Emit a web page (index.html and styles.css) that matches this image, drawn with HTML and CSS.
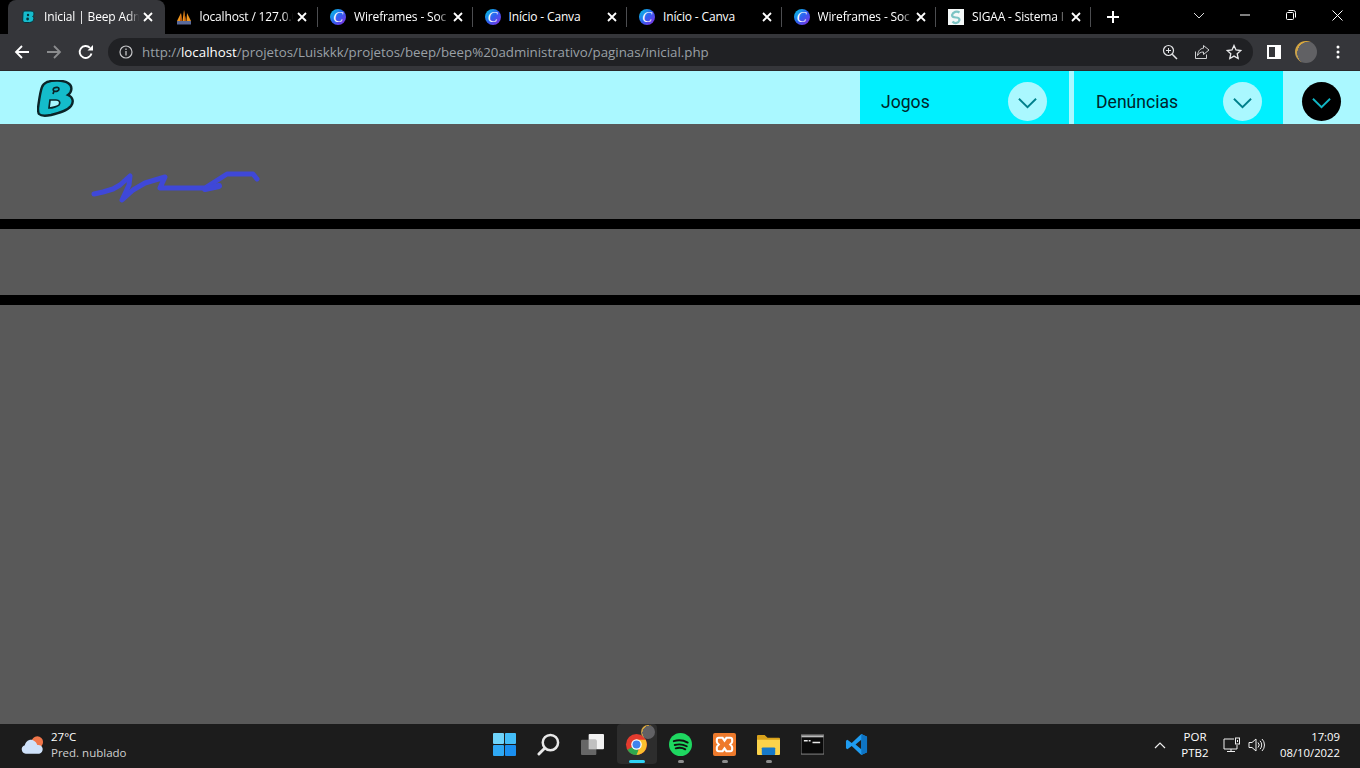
FILE: index.html
```html
<!DOCTYPE html>
<html lang="pt-BR">
<head>
<meta charset="utf-8">
<title>Inicial | Beep Admin</title>
<link rel="stylesheet" href="styles.css">
</head>
<body>
<svg class="defs" width="0" height="0" aria-hidden="true">
  <defs>
    <symbol id="x" viewBox="0 0 10 10"><path d="M1 1l8 8M9 1l-8 8" fill="none" stroke="#fff" stroke-width="1.8"/></symbol>
    <symbol id="chev" viewBox="0 0 24 14"><path d="M2 2l10 10L22 2" fill="none" stroke="currentColor" stroke-width="2.200"/></symbol>
  </defs>
</svg>

<div class="tabstrip">
  <div class="tab active">
    <svg class="fav" viewBox="0 0 16 16"><path d="M5 2h6c2 0 3 1 3 3 0 1-.5 2-1.300 2.500 1 .5 1.300 1.500 1.100 2.500-.3 2-2 3.500-4.300 3.500H5c-1.500 0-2.500-1-2.300-2.500L3 4c.2-1.200 1-2 2-2z" fill="#16bccd" stroke="#06333a" stroke-width="1"/><circle cx="8" cy="6" r="1.200" fill="#06333a"/><circle cx="7.600" cy="10" r="1.400" fill="#06333a"/></svg>
    <span class="title">Inicial | Beep Adm</span>
    <svg class="close"><use href="#x"/></svg>
  </div>
  <div class="tab nosep">
    <svg class="fav" viewBox="0 0 16 16"><path d="M1 12L5 4l1 8zM6.500 12L8 1l2 11zM10.500 12L11 4l4 8z" fill="#f0961e"/><path d="M5 4l1 8H4zM8 1l2 11H8.500z" fill="#b8560c"/><rect x="1" y="12" width="14" height="3.500" fill="#5a6a9a"/></svg>
    <span class="title">localhost / 127.0.0</span>
    <svg class="close"><use href="#x"/></svg>
  </div>
  <div class="tab">
    <span class="canva">C</span>
    <span class="title">Wireframes - Soc</span>
    <svg class="close"><use href="#x"/></svg>
  </div>
  <div class="tab">
    <span class="canva">C</span>
    <span class="title title-wide">Início - Canva</span>
    <svg class="close"><use href="#x"/></svg>
  </div>
  <div class="tab">
    <span class="canva">C</span>
    <span class="title title-wide">Início - Canva</span>
    <svg class="close"><use href="#x"/></svg>
  </div>
  <div class="tab">
    <span class="canva">C</span>
    <span class="title">Wireframes - Soc</span>
    <svg class="close"><use href="#x"/></svg>
  </div>
  <div class="tab">
    <svg class="fav" viewBox="0 0 16 16"><rect width="16" height="16" fill="#f4f8f8"/><path d="M11.500 3.500A5 5 0 0 0 4 6c0 2.500 2.500 2.500 4 2.500s3.500.5 3.500 2.500A4 4 0 0 1 4.500 12.500" fill="none" stroke="#7cc4c4" stroke-width="2.200"/></svg>
    <span class="title">SIGAA - Sistema I</span>
    <svg class="close"><use href="#x"/></svg>
  </div>
  <div class="newtab"><svg width="12" height="12" viewBox="0 0 12 12"><path d="M6 0v12M0 6h12" stroke="#fff" stroke-width="2"/></svg></div>
  <div class="winctl">
    <span class="wbtn"><svg width="12" height="7" viewBox="0 0 12 7"><path d="M1 1l5 5 5-5" fill="none" stroke="#ddd"/></svg></span>
    <span class="wbtn"><svg width="10" height="2" viewBox="0 0 10 2"><path d="M0 1h10" stroke="#fff"/></svg></span>
    <span class="wbtn"><svg width="10" height="10" viewBox="0 0 10 10"><rect x=".5" y="2.500" width="7" height="7" rx="1" fill="none" stroke="#fff"/><path d="M2.500 .5h5a2 2 0 0 1 2 2v5" fill="none" stroke="#fff"/></svg></span>
    <span class="wbtn"><svg width="11" height="11" viewBox="0 0 11 11"><path d="M.5 .5l10 10M10.500 .5l-10 10" stroke="#fff"/></svg></span>
  </div>
</div>

<div class="toolbar">
  <svg class="tool" viewBox="0 0 16 16"><path d="M15 8H2M8 2L2 8l6 6" fill="none" stroke="#fff" stroke-width="1.800"/></svg>
  <svg class="tool" viewBox="0 0 16 16"><path d="M1 8h13M8 2l6 6-6 6" fill="none" stroke="#8b8c8e" stroke-width="1.800"/></svg>
  <svg class="tool" viewBox="0 0 16 16"><path d="M13.500 9.500A6 6 0 1 1 12 3.800" fill="none" stroke="#fff" stroke-width="1.900"/><path d="M9.500 6.500H15V1z" fill="#fff"/></svg>
  <div class="omnibox">
    <svg class="info" viewBox="0 0 14 14"><circle cx="7" cy="7" r="6" fill="none" stroke="#c4c5c7" stroke-width="1.200"/><path d="M7 6v4.500M7 3.500v1.400" stroke="#c4c5c7" stroke-width="1.300"/></svg>
    <span class="url">http://<b>localhost</b>/projetos/Luiskkk/projetos/beep/beep%20administrativo/paginas/inicial.php</span>
    <svg class="omni-ic" viewBox="0 0 16 16"><circle cx="6.500" cy="6.500" r="5" fill="none" stroke="#e4e5e7" stroke-width="1.200"/><path d="M10.200 10.200L15 15" stroke="#e4e5e7" stroke-width="1.500"/><path d="M4 6.500h5M6.500 4v5" stroke="#e4e5e7"/></svg>
    <svg class="omni-ic" viewBox="0 0 16 16"><path d="M1.500 7.500v7h11v-4" fill="none" stroke="#d0d1d3"/><path d="M9.500 1.500l5.500 4.500-5.500 4.500V8C6.500 8 5 9 3.500 11.500 4 7 6 4.500 9.500 4.200z" fill="none" stroke="#d0d1d3"/></svg>
    <svg class="omni-ic" viewBox="0 0 16 16"><path d="M8 1.500l2 4.500 4.800.5-3.600 3.200 1 4.800L8 12.100l-4.200 2.400 1-4.800L1.200 6.500 6 6z" fill="none" stroke="#e8e9eb" stroke-width="1.300"/></svg>
  </div>
  <svg class="panel" viewBox="0 0 14 14"><rect x="1" y="1" width="12" height="12" fill="none" stroke="#fff" stroke-width="2"/><rect x="8" y="1" width="5" height="12" fill="#fff"/></svg>
  <span class="avatar small"></span>
  <svg class="dots" viewBox="0 0 4 14"><circle cx="2" cy="2" r="1.500" fill="#fff"/><circle cx="2" cy="7" r="1.500" fill="#fff"/><circle cx="2" cy="12" r="1.500" fill="#fff"/></svg>
</div>

<header class="nav">
  <svg class="logo" viewBox="0 0 38 38">
    <path d="M10 2C16 0 26 0 31 3c5 3 4 9 0 12 5 2 6 7 3 11-4 5-12 7-20 9-5 1-10 1-12-1-1-1-1-3-1-6C2 21 3 12 5 7c1-3 3-4 5-5z" fill="#14bccb" stroke="#0b2428" stroke-width="2.400"/>
    <path d="M17 8c2-1 5-1 5 1s-3 3-5 2c-1-1-1-2 0-3zM17 11l-1 3" fill="#14bccb" stroke="#0b2428" stroke-width="1.700"/>
    <path d="M13 20h6c3 0 5 2 3 5-1 1-6 3-10 3z" fill="#a9f7ff" stroke="#0b2428" stroke-width="1.700"/>
  </svg>
  <nav class="menu">
    <a class="menu-item">Jogos<span class="round"><svg class="ch" viewBox="0 0 24 14"><use href="#chev"/></svg></span></a>
    <a class="menu-item">Denúncias<span class="round"><svg class="ch" viewBox="0 0 24 14"><use href="#chev"/></svg></span></a>
  </nav>
  <div class="user"><span class="round dark"><svg class="ch" viewBox="0 0 24 14"><use href="#chev"/></svg></span></div>
</header>

<main class="main">
  <section class="hero">
    <svg class="scribble" width="175" height="34" viewBox="0 0 175 34">
      <path d="M6 24l9-2 10-3 7-4 10-9-1 9-7 15 11-10 12-7 20-6-5 11h45l22-14h26l4 5" fill="none" stroke="#3f48d8" stroke-width="5" stroke-linecap="round" stroke-linejoin="round"/>
      <path d="M117 19l14-3" fill="none" stroke="#3f48d8" stroke-width="6" stroke-linecap="round"/>
    </svg>
  </section>
  <div class="rule"></div>
  <section class="band"></section>
  <div class="rule"></div>
</main>

<footer class="taskbar">
  <div class="weather">
    <svg class="cloud" viewBox="0 0 26 20"><circle cx="18" cy="7" r="6" fill="#f0764a"/><path d="M6 19a4.500 4.500 0 0 1-1-8.800C6 6 10 3.500 13.500 5c2.500 1 4 3 4.500 5a4.500 4.500 0 0 1 2 9z" fill="#cfe2fa"/></svg>
    <div class="wtext"><span class="temp">27°C</span><span class="cond">Pred. nublado</span></div>
  </div>
  <div class="apps">
    <span class="app">
      <svg class="appic" viewBox="0 0 24 24"><rect x="0" y="0" width="11.500" height="11.500" rx="1" fill="#6fd4fb"/><rect x="12.500" y="0" width="11.500" height="11.500" rx="1" fill="#43bdf8"/><rect x="0" y="12.500" width="11.500" height="11.500" rx="1" fill="#2fa8f4"/><rect x="12.500" y="12.500" width="11.500" height="11.500" rx="1" fill="#1a8ff0"/></svg>
    </span>
    <span class="app">
      <svg class="appic" viewBox="0 0 24 24"><circle cx="14" cy="10" r="8" fill="none" stroke="#e8e8e8" stroke-width="2.600"/><path d="M8 16l-6 6" stroke="#e8e8e8" stroke-width="3" stroke-linecap="round"/></svg>
    </span>
    <span class="app">
      <svg class="appic" viewBox="0 0 24 24"><rect x="8" y="1" width="16" height="16" rx="1" fill="#f2f2f2"/><rect x="0" y="7" width="16" height="16" rx="1" fill="#6a6a6a" opacity=".95"/><rect x="8" y="7" width="8" height="10" fill="#c0c0c0"/></svg>
    </span>
    <span class="app current">
      <svg class="appic" viewBox="0 0 24 24"><circle cx="12" cy="12" r="11" fill="#e33b2e"/><path d="M12 12L2.500 17.500A11 11 0 0 0 12 23c1 0 2 0 3-.5z" fill="#2fa84f"/><path d="M12 7h9.500A11 11 0 0 1 12 23l4-10z" fill="#fbc02d"/><circle cx="12" cy="12" r="5.500" fill="#fff"/><circle cx="12" cy="12" r="4.200" fill="#3f83ee"/></svg>
      <span class="avatar badge"></span>
      <span class="mark active-mark"></span>
    </span>
    <span class="app">
      <svg class="appic" viewBox="0 0 24 24"><circle cx="12" cy="12" r="12" fill="#1ed760"/><path d="M5 8.500c5-1.500 10-1 14.500 1.500M6 12.500c4.500-1.200 8.500-.8 12.500 1.300M7 16c3.500-1 7-.7 10 1" fill="none" stroke="#111" stroke-width="2" stroke-linecap="round"/></svg>
      <span class="mark"></span>
    </span>
    <span class="app">
      <svg class="appic" viewBox="0 0 24 24"><rect width="24" height="24" rx="2" fill="#ee7a2c"/><path d="M6 5h4l2 3 2-3h4c1 0 2 1 2 2v2c0 1-1 2-2 3 1 1 2 2 2 3v2c0 1-1 2-2 2h-4l-2-3-2 3H6c-1 0-2-1-2-2v-2c0-1 1-2 2-3-1-1-2-2-2-3V7c0-1 1-2 2-2z" fill="none" stroke="#fff" stroke-width="2.200"/></svg>
      <span class="mark"></span>
    </span>
    <span class="app">
      <svg class="appic" viewBox="0 0 24 24"><path d="M0 3c0-.6.4-1 1-1h7l3 3h12c.6 0 1 .4 1 1v3H0z" fill="#d9a21b"/><path d="M0 7h24v15c0 .6-.4 1-1 1H1c-.6 0-1-.4-1-1z" fill="#fbd34b"/><rect x="5" y="15" width="14" height="8" rx="1" fill="#1679c9"/></svg>
      <span class="mark"></span>
    </span>
    <span class="app">
      <svg class="appic" viewBox="0 0 24 24"><rect y="2" width="24" height="20" fill="#0a0a0a" stroke="#8a8a8a"/><rect x=".5" y="2.500" width="23" height="2" fill="#bcbcbc"/><path d="M3 8h4M8 8h2M12 10h8" stroke="#e8e8e8" stroke-width="1.500"/></svg>
    </span>
    <span class="app">
      <svg class="appic" viewBox="0 0 24 24"><path d="M17 1l6 3v16l-6 3L7 13.500 2.500 17 1 16v-8l1.500-1L7 10.500zM17 7l-6 5 6 5z" fill="#1f9cf0"/><path d="M17 1l6 3v16l-6 3z" fill="#0e74c4"/></svg>
    </span>
  </div>
  <div class="tray">
    <svg class="caret" viewBox="0 0 12 7"><path d="M1 6l5-5 5 5" fill="none" stroke="#eee" stroke-width="1.200"/></svg>
    <div class="lang"><span>POR</span><span>PTB2</span></div>
    <svg class="net" viewBox="0 0 18 16"><path d="M11 2H1v10h13V8M4 14.500h8M8 12v2.500" fill="none" stroke="#eee"/><rect x="12.500" y="1" width="4" height="6" fill="#1c1c1c" stroke="#eee"/><path d="M14.500 3v2" stroke="#eee"/></svg>
    <svg class="vol" viewBox="0 0 17 16"><path d="M1 5.500h3L8 2v12l-4-3.500H1z" fill="none" stroke="#eee"/><path d="M10 5.500a3.500 3.500 0 0 1 0 5M12 3.800a6 6 0 0 1 0 8.400M14 2a8.500 8.500 0 0 1 0 12" fill="none" stroke="#eee"/></svg>
    <div class="clock"><span>17:09</span><span>08/10/2022</span></div>
  </div>
</footer>
</body>
</html>
```

FILE: styles.css
```css
* { box-sizing: border-box; }
html, body { margin: 0; height: 100%; overflow: hidden; }
body {
  display: flex;
  flex-direction: column;
  height: 768px;
  background: #595959;
  font-family: "Open Sans", "Noto Sans", "Liberation Sans", sans-serif;
  color: #fff;
}
.defs { display: block; height: 0; }

/* Tab strip */
.tabstrip {
  display: flex;
  align-items: stretch;
  height: 34px;
  padding-left: 9px;
  background: #000;
  flex: none;
}
.tab {
  position: relative;
  display: flex;
  align-items: center;
  width: 154.5px;
  flex: none;
  padding: 0 10px 0 11px;
  border-left: 1px solid transparent;
  font-size: 12px;
  letter-spacing: -0.15px;
}
.tab::after {
  content: "";
  position: absolute;
  right: 0;
  top: 7px;
  height: 20px;
  width: 1px;
  background: #4c4d50;
}
.tab.active {
  background: #35363a;
  border-radius: 8px 8px 0 0;
  margin-left: -1px;
  width: 156.5px;
  padding-right: 12px;
}
.tab.active::after { display: none; }
.nosep { margin-left: -1px; padding-right: 11px; }
.fav { width: 16px; height: 16px; flex: none; }
.canva {
  flex: none;
  width: 16px;
  height: 16px;
  border-radius: 50%;
  background: linear-gradient(135deg, #00d0e0, #2f5ff0 50%, #8a2be2);
  color: #fff;
  font: italic 15px/16px "Liberation Serif", serif;
  text-align: center;
}
.title {
  flex: 1;
  min-width: 0;
  margin-left: 8px;
  white-space: nowrap;
  overflow: hidden;
  -webkit-mask-image: linear-gradient(90deg, #000 86%, transparent 97%);
  mask-image: linear-gradient(90deg, #000 86%, transparent 97%);
  line-height: 34px;
}
.title-wide { -webkit-mask-image: none; mask-image: none; }
.close { width: 10px; height: 10px; flex: none; margin-left: 1px; }
.newtab { width: 44px; display: flex; align-items: center; justify-content: center; }
.winctl { display: flex; margin-left: auto; }
.wbtn {
  width: 46px;
  height: 30px;
  display: flex;
  align-items: center;
  justify-content: center;
}

/* Toolbar */
.toolbar {
  display: flex;
  align-items: center;
  height: 37px;
  flex: none;
  background: #35363a;
  border-bottom: 1px solid #2a2a2c;
  padding: 0 0 1px 0;
}
.tool { width: 16px; height: 16px; flex: none; margin-left: 14px; margin-right: 2px; }
.omnibox {
  display: flex;
  align-items: center;
  flex: none;
  width: 1145px;
  height: 28px;
  margin-left: 12px;
  border-radius: 14px;
  background: #202124;
  padding: 0 11px 0 11px;
}
.info { width: 14px; height: 14px; flex: none; }
.url {
  flex: 1;
  margin-left: 9px;
  font-size: 13.3px;
  color: #9aa0a6;
  white-space: nowrap;
  overflow: hidden;
}
.url b { font-weight: 400; color: #fff; }
.omni-ic { width: 16px; height: 16px; flex: none; margin-left: 16px; }
.panel { width: 14px; height: 14px; flex: none; margin-left: 14px; }
.avatar {
  display: block;
  border-radius: 50%;
  background:
    radial-gradient(circle at 62% 55%, #616164 0 62%, transparent 63%),
    linear-gradient(#dca93c, #b99a56);
}
.avatar.small { width: 22px; height: 22px; flex: none; margin-left: 14px; }
.dots { width: 4px; height: 14px; flex: none; margin-left: 19px; }

/* Page nav */
.nav {
  display: flex;
  align-items: stretch;
  height: 53px;
  flex: none;
  background: #aaf8ff;
}
.logo { width: 38px; height: 38px; margin: 9px 0 0 37px; flex: none; }
.menu { display: flex; gap: 5px; margin-left: auto; }
.menu-item {
  display: flex;
  align-items: center;
  justify-content: space-between;
  width: 209px;
  padding: 8px 22px 0 22px;
  background: #00f0ff;
  color: #00242a;
  font: 400 17.6px "Roboto", sans-serif;
}
.menu-item:first-child { padding-left: 21px; }
.menu-item:last-child { padding-right: 21px; }
.round {
  display: flex;
  align-items: center;
  justify-content: center;
  width: 39px;
  height: 39px;
  border-radius: 50%;
  background: #aaf8ff;
  color: #00808c;
}
.round.dark { background: #000; color: #11b6c4; }
.ch { width: 21px; height: 12px; margin-top: 3px; }
.user { display: flex; align-items: center; width: 77px; padding: 8px 0 0 19px; }

/* Main */
.main { flex: 1; min-height: 0; background: #595959; }
.hero { height: 95px; padding: 46px 0 0 88px; }
.scribble { display: block; }
.rule { height: 10px; background: #000; }
.band { height: 66px; }

/* Taskbar */
.taskbar {
  display: grid;
  grid-template-columns: 1fr auto 1fr;
  align-items: center;
  height: 44px;
  flex: none;
  background: #1c1c1c;
  font-family: "Open Sans", "Noto Sans", sans-serif;
  font-size: 11.5px;
}
.weather { display: flex; align-items: center; padding: 0 0 2px 20px; }
.cloud { width: 25px; height: 20px; flex: none; margin-right: 6px; }
.wtext, .lang, .clock { display: flex; flex-direction: column; line-height: 16px; }
.cond { color: #d0d0d0; }
.apps { display: flex; align-self: start; margin-left: 1px; }
.app {
  position: relative;
  width: 44px;
  height: 40px;
  display: flex;
  align-items: center;
  justify-content: center;
}
.app.current { background: #2d2d2d; border-radius: 4px; width: 40px; margin: 0 2px; }
.appic { width: 23px; height: 23px; }
.badge { position: absolute; top: 1px; right: 2px; width: 14px; height: 14px; }
.mark {
  position: absolute;
  bottom: 1px;
  left: 50%;
  width: 6px;
  height: 3px;
  margin-left: -3px;
  border-radius: 2px;
  background: #8d8d8d;
}
.active-mark { width: 16px; margin-left: -8px; background: #2ed3f5; }
.tray { display: flex; align-items: center; justify-content: flex-end; padding: 0 20px 2px 0; }
.caret { width: 12px; height: 7px; flex: none; }
.lang { width: 46px; margin-left: 6px; text-align: center; }
.net { width: 18px; height: 16px; flex: none; margin-left: 5px; }
.vol { width: 17px; height: 16px; flex: none; margin-left: 7px; }
.clock { width: 75px; text-align: right; font-size: 11.3px; }
```
